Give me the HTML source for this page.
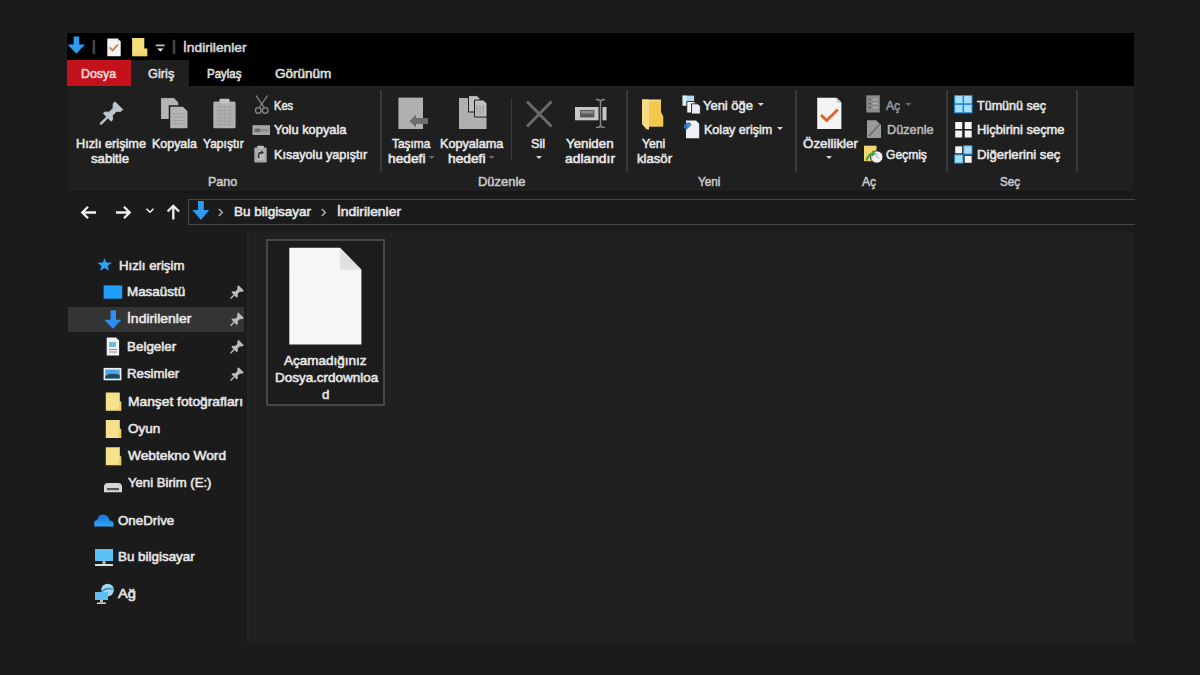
<!DOCTYPE html>
<html><head><meta charset="utf-8"><style>
html,body{margin:0;padding:0;}
body{width:1200px;height:675px;background:#1b1b1b;position:relative;overflow:hidden;font-family:"Liberation Sans", sans-serif;}
.a{position:absolute;}
.t{position:absolute;white-space:nowrap;line-height:1;transform-origin:0 0;}
svg{position:absolute;overflow:visible;}
</style></head><body>
<!-- title bar & tabs -->
<div class="a" style="left:67px;top:33px;width:1067px;height:53px;background:#000"></div>
<div class="a" style="left:67px;top:59.5px;width:64px;height:26.5px;background:#c4121c"></div>
<div class="a" style="left:131px;top:59.5px;width:58px;height:26.5px;background:#1f1f1f"></div>
<!-- ribbon -->
<div class="a" style="left:67px;top:86px;width:1067px;height:106.5px;background:#1f1f1f"></div>
<div class="a" style="left:67px;top:190.5px;width:1067px;height:2px;background:#181818"></div>
<div class="a" style="left:380px;top:90px;width:1.5px;height:82px;background:#3a3a3a"></div>
<div class="a" style="left:626px;top:90px;width:1.5px;height:82px;background:#3a3a3a"></div>
<div class="a" style="left:795px;top:90px;width:1.5px;height:82px;background:#3a3a3a"></div>
<div class="a" style="left:946px;top:90px;width:1.5px;height:82px;background:#3a3a3a"></div>
<div class="a" style="left:1076px;top:90px;width:1.5px;height:82px;background:#3a3a3a"></div>
<div class="a" style="left:511px;top:98px;width:1px;height:62px;background:#3c3c3c"></div>
<!-- address row -->
<div class="a" style="left:67px;top:192.5px;width:1067px;height:39.5px;background:#1b1b1b"></div>
<div class="a" style="left:188px;top:199px;width:946px;height:23.5px;border:1px solid #474747;border-right:none;background:#1b1b1b"></div>
<!-- nav pane -->
<div class="a" style="left:67px;top:232px;width:180px;height:411px;background:#1b1b1b"></div>
<!-- content -->
<div class="a" style="left:247px;top:232px;width:887px;height:411px;background:#202020"></div>
<div class="a" style="left:68px;top:306.5px;width:176px;height:25px;background:#343434"></div>
<div class="a" style="left:247px;top:232px;width:2px;height:411px;background:#252525"></div>
<div class="a" style="left:265.5px;top:239px;width:115.5px;height:162.5px;border:2px solid #474747;background:#1c1c1c"></div>
<svg width="1200" height="675" style="left:0;top:0" viewBox="0 0 1200 675">
<defs>
 <linearGradient id="od" x1="0" y1="0" x2="0" y2="1"><stop offset="0" stop-color="#1670dc"/><stop offset="1" stop-color="#34aaf8"/></linearGradient>
 <g id="dd"><path d="M-3 0 L3 0 L0 3 Z"/></g>
 <g id="pin"><path d="M-1 0 L1 0 L0.8 -2 Z"/></g>
 <g id="fold"><path d="M0 0 L11.5 0 L15.3 4 L15.3 17.8 L0 17.8 Z"/></g>
</defs>
<!-- ===== title bar ===== -->
<path fill="#2f9bf0" d="M73.6 36.5 H79.2 V44.6 H85 L76.4 53.8 L67.6 44.6 H73.6 Z"/>
<rect x="92.6" y="39.8" width="2.6" height="14.2" fill="#444"/>
<rect x="172.7" y="39.8" width="2.6" height="14.2" fill="#444"/>
<path fill="#f4f4f4" d="M107.3 38.4 H117.5 L120.7 41.6 V56.2 H107.3 Z"/>
<path fill="#d0d0d8" d="M117.5 38.4 V41.6 H120.7 Z"/>
<path fill="none" stroke="#c88048" stroke-width="1.8" d="M109.6 47.3 L112.5 50.4 L118 44.6"/>
<path fill="#f6de7c" d="M132.1 38.1 H144.3 V48.6 H147.3 V56.2 H132.1 Z"/>
<path fill="#ecc95a" d="M132.1 52.5 H147.3 V56.2 H132.1 Z" opacity="0.5"/>
<rect x="155.7" y="44.5" width="9" height="1.8" fill="#bdbdbd"/>
<path fill="#f4f4f4" d="M157.3 48.6 H163.5 L160.4 51.6 Z"/>
<!-- ===== ribbon: Pano ===== -->
<g transform="translate(108.3 116.3) rotate(45)" fill="#bcc6cc" stroke="#bcc6cc" stroke-width="0.8" stroke-linejoin="round">
  <path d="M-5.5 1.5 H5.5 V-0.5 L2.3 -3.5 V-9 L5.5 -12.5 V-15 H-5.5 V-12.5 L-2.3 -9 V-3.5 L-5.5 -0.5 Z"/>
  <rect x="-0.9" y="1.5" width="1.8" height="9.5"/>
</g>
<path fill="#b4b4b4" stroke="#1f1f1f" stroke-width="1" d="M160.6 97.6 H174 L178.8 102.4 V119.5 H160.6 Z"/>
<path fill="#b4b4b4" stroke="#1f1f1f" stroke-width="1.5" d="M169.5 106 H183.2 L188.2 111 V129 H169.5 Z"/>
<path fill="none" stroke="#9a9a9a" stroke-width="0.8" d="M173 113.5 H185 M173 117 H185 M173 120.5 H185 M173 124 H185"/>
<rect x="213.3" y="101.5" width="22.3" height="26.8" rx="1.5" fill="#b0b0b0"/>
<rect x="219.5" y="98.8" width="10" height="4.5" rx="1" fill="#c4c4c4"/>
<path fill="none" stroke="#9c9c9c" stroke-width="0.7" d="M216 107 H233 M216 110.5 H233 M216 114 H233 M216 117.5 H233 M216 121 H233 M216 124.5 H233 M219.5 105 V126 M224.5 105 V126 M229.5 105 V126"/>
<!-- scissors -->
<g fill="none" stroke="#8a8a8a" stroke-width="1.3">
  <path d="M256 95.5 L264.5 108 M267.5 95.5 L259 108"/>
  <circle cx="258.3" cy="110.5" r="2.8"/>
  <circle cx="265.2" cy="110.5" r="2.8"/>
</g>
<rect x="252.5" y="125.2" width="17.5" height="9.8" fill="#a6a6a6"/>
<rect x="254.5" y="128.5" width="6" height="3.5" fill="#6a6a6a"/>
<rect x="261.5" y="129" width="7" height="2.5" fill="#8a8a8a"/>
<rect x="254.3" y="147.5" width="12.4" height="15" rx="1" fill="#a8a8a8"/>
<rect x="257.2" y="145.8" width="6.6" height="3" rx="0.8" fill="#c0c0c0"/>
<rect x="256.8" y="150.5" width="7.6" height="9.5" fill="#bdbdbd"/>
<path fill="none" stroke="#3a3a3a" stroke-width="1.6" d="M258.6 158.2 V154.8 Q258.6 152.6 261 152.6 H262.8 M261.2 151.2 L262.8 152.6 L261.2 154"/>
<!-- ===== Düzenle ===== -->
<path fill="#b0b0b0" d="M398.4 97.6 H423 V129 H398.4 Z"/>
<path fill="#6e6e6e" d="M409.5 121 L416 114.5 V118 H428 V124 H416 V127.5 Z"/>
<path fill="#b0b0b0" d="M459 98 H479 L486.5 105.5 V129 H459 Z"/>
<path fill="#c0c0c0" stroke="#1f1f1f" stroke-width="1" d="M468.5 95.6 H477 L480 98.6 V112 H468.5 Z"/>
<path fill="#c0c0c0" stroke="#1f1f1f" stroke-width="1" d="M474.5 100 H483.5 L487 103.5 V117 H474.5 Z"/>
<path stroke="#8a8a8a" stroke-width="0.8" d="M477 105 V115 M480 105 V115 M483 105 V115"/>
<path fill="none" stroke="#6a6a6a" stroke-width="3" d="M527 101.5 L551.5 126.5 M551.5 101.5 L527 126.5"/>
<rect x="575" y="107" width="31.5" height="13.3" fill="#c6c6c6"/>
<rect x="580" y="110" width="14.5" height="7.5" fill="#5a5a5a"/>
<rect x="581" y="111" width="12.5" height="2.5" fill="#8c8c8c"/>
<rect x="598.5" y="106" width="4" height="15.5" fill="#1f1f1f"/>
<path fill="none" stroke="#8a8a8a" stroke-width="1.4" d="M600.5 100.5 V126.5 M596 99.5 Q600.5 99.5 600.5 102 Q600.5 99.5 605 99.5 M596 127.5 Q600.5 127.5 600.5 125 Q600.5 127.5 605 127.5"/>
<!-- ===== Yeni ===== -->
<path fill="#f7da85" d="M642 99.6 H661 V126.3 H649 L647 130 L642 124 Z"/>
<path fill="#f0c64e" d="M649 102 H661 V126.3 H663 V116 L661 112 V126.3 H649 Z"/>
<path fill="#f2c84c" d="M649 101.5 H661 V113 L663.3 117 V126.5 H649 Z"/>
<path fill="#f7da85" d="M642 99.6 H649 V130 L642 124 Z"/>
<rect x="682.6" y="95.6" width="11.5" height="10" fill="#b0dcf0"/>
<rect x="682.6" y="95.6" width="4" height="10" fill="#d6eef8"/>
<path fill="#f4f0f0" stroke="#1f1f1f" stroke-width="0.9" d="M686.8 101.5 H694 L696.5 104 V113 H686.8 Z"/>
<path fill="#ece8f4" stroke="#1f1f1f" stroke-width="0.9" d="M691.5 103.8 H698 L700.4 106.2 V114 H691.5 Z"/>
<path fill="#f2f2f4" d="M686 120.5 H696 L699.2 123.7 V138.2 H686 Z"/>
<path fill="#2a6fb8" d="M683.5 127.5 Q684 122 689.5 122.5 L691.5 124.5 L686.5 129.5 Z"/>
<path fill="#4a9ae0" d="M686.5 123.5 H690 L691.5 125 L687.5 129 Z" opacity="0.8"/>
<!-- ===== Aç ===== -->
<path fill="#f4f4f4" d="M817.2 97.7 H836.5 L841.4 102.6 V129.1 H817.2 Z"/>
<path fill="#c8c8d0" d="M836.5 97.7 V102.6 H841.4 Z"/>
<path fill="none" stroke="#e0622a" stroke-width="2.8" d="M821 115 L826.6 120.6 L837.8 109.4"/>
<rect x="866.3" y="95.3" width="13.5" height="17.2" fill="#8c8c8c"/>
<path stroke="#5c5c5c" stroke-width="1.5" d="M868.5 99.5 H871 M868.5 103.5 H871 M868.5 107.5 H871"/>
<path stroke="#b0b0b0" stroke-width="1.5" d="M872.5 99.5 H878 M872.5 103.5 H878 M872.5 107.5 H878"/>
<path fill="#9a9a9a" d="M867 120.2 H876 L881 125 V138 H867 Z"/>
<path fill="none" stroke="#6a6a6a" stroke-width="1.5" d="M869 136 L880 124"/>
<rect x="864" y="145.7" width="12.5" height="15.5" fill="#f4d770"/>
<circle cx="876.8" cy="157" r="6.2" fill="#f0f0f0" stroke="#1f1f1f" stroke-width="1"/>
<path fill="none" stroke="#9aa0a8" stroke-width="0.9" d="M876.8 153.5 V157 L879 158.5"/>
<path fill="none" stroke="#3aa83a" stroke-width="2.2" d="M866.5 160.5 Q869 153 874 153.5"/>
<path fill="#3aa83a" d="M872 150.5 L876 153.5 L872 156.8 Z"/>
<!-- ===== Seç ===== -->
<g fill="#a6e0fa" stroke="#2b8fd8" stroke-width="1">
 <rect x="954.7" y="95.5" width="8.3" height="8.3"/>
 <rect x="963.7" y="95.5" width="8.3" height="8.3"/>
 <rect x="954.7" y="104.5" width="8.3" height="8.3"/>
 <rect x="963.7" y="104.5" width="8.3" height="8.3"/>
</g>
<g fill="#f4f4f4">
 <rect x="955.2" y="122" width="7" height="7"/>
 <rect x="964.7" y="122" width="7" height="7"/>
 <rect x="955.2" y="130.5" width="7" height="7"/>
 <rect x="964.7" y="130.5" width="7" height="7"/>
</g>
<rect x="955.2" y="146.3" width="7" height="7" fill="#f4f4f4"/>
<rect x="963.7" y="145.8" width="8.3" height="8.3" fill="#a6e0fa" stroke="#2b8fd8" stroke-width="1"/>
<rect x="954.7" y="154.8" width="8.3" height="8.3" fill="#a6e0fa" stroke="#2b8fd8" stroke-width="1"/>
<rect x="964.7" y="155.8" width="7" height="7" fill="#f4f4f4"/>
<!-- dropdown arrows -->
<g fill="#d8d8d8">
 <use href="#dd" x="539" y="156"/>
 <use href="#dd" x="829" y="156"/>
 <use href="#dd" x="760.8" y="103"/>
 <use href="#dd" x="780" y="127"/>
</g>
<g fill="#6a6a6a"><use href="#dd" x="908.3" y="103"/><use href="#dd" x="431.7" y="156"/><use href="#dd" x="491.7" y="156"/></g>
<!-- ===== nav buttons ===== -->
<g fill="none" stroke="#f0f0f0" stroke-width="2.3">
 <path d="M82.3 212.5 H96 M88 206.8 L82.3 212.5 L88 218.2"/>
 <path d="M116 212.5 H129.7 M124 206.8 L129.7 212.5 L124 218.2"/>
 <path d="M173.3 219.5 V205.8 M167.6 211.5 L173.3 205.8 L179 211.5"/>
 <path stroke-width="1.5" d="M146.5 208.8 L150 212.3 L153.5 208.8"/>
</g>
<path fill="#2f9bf0" d="M198 201 H203.8 V210 H209.2 L200.9 220 L192.5 210 H198 Z"/>
<g fill="none" stroke="#a8a8a8" stroke-width="1.6">
 <path d="M218.8 209 L222.3 212.5 L218.8 216"/>
 <path d="M321.8 209 L325.3 212.5 L321.8 216"/>
</g>
<!-- ===== nav pane ===== -->
<path fill="#2fa3f5" d="M104.6 258.3 L106.3 262.4 L111.8 262.7 L107.6 265.9 L109.1 270.8 L104.6 268 L100.1 270.8 L101.6 265.9 L97.4 262.7 L102.9 262.4 Z"/>
<rect x="103.6" y="285.4" width="18.6" height="13.3" fill="#1fa0f8"/>
<path fill="#2b8ef0" d="M110.5 310.3 H116 V319.7 H121.4 L112.9 328.8 L104.3 319.7 H110.5 Z"/>
<path fill="#f2f2f2" d="M106.7 337.5 H116 L119.1 340.6 V355.4 H106.7 Z"/>
<path fill="#5aa8d8" d="M109 342 H116 V347 H109 Z" opacity="0.8"/>
<path stroke="#7a8a9a" stroke-width="1" d="M109 349.5 H117 M109 352 H117"/>
<rect x="103.6" y="367.9" width="17.8" height="12.4" fill="#f0f0f0"/>
<rect x="105.3" y="369.6" width="14.4" height="9" fill="#4aa8e8"/>
<path fill="#1e4a5a" d="M105.3 376 Q110 372 119.7 375 V378.6 H105.3 Z"/>
<g fill="#f6e28a">
 <path d="M105.8 392.6 H119.8 V400.9 L121.2 402.1 V410.7 H105.8 Z"/>
 <path d="M105.8 419.9 H119.8 V428.2 L121.2 429.4 V438.0 H105.8 Z"/>
 <path d="M105.8 447.2 H119.8 V455.5 L121.2 456.7 V465.3 H105.8 Z"/>
 <path fill="#e9c850" opacity="0.7" d="M119.8 400.9 L121.2 402.1 V410.7 H118 Z M119.8 428.2 L121.2 429.4 V438 H118 Z M119.8 455.5 L121.2 456.7 V465.3 H118 Z"/>
</g>
<path fill="#d6d6d6" d="M104 492.3 V487 Q104 483 108 483 H118 Q122 483 122 487 V492.3 Z"/>
<rect x="107" y="488" width="12" height="2.2" fill="#555"/>
<path fill="url(#od)" d="M95.3 526.5 H112 Q114 527.3 113.5 523.5 Q113 520.5 109.5 520.5 Q108 514 102.5 514.5 Q98 515 97.5 519.5 Q94 520 94.2 524 Q94.5 527.3 96 527.3 Z"/>
<rect x="95" y="549" width="18" height="12" fill="#5cc0f5"/>
<rect x="102.5" y="561" width="3" height="3" fill="#b8b8b8"/>
<rect x="95" y="564" width="18" height="2" fill="#e0e0e0"/>
<circle cx="107.6" cy="590" r="6.3" fill="#a4d8f2"/>
<path fill="#2f86d0" d="M101.5 590.5 Q106 585.5 113.6 588.5 V590.2 Q107 588 101.8 592.5 Z" opacity="0.8"/>
<rect x="95" y="592" width="13" height="8" fill="#5cc0f5"/>
<rect x="100" y="600" width="3" height="2.5" fill="#b8b8b8"/>
<rect x="97" y="602.5" width="9" height="1.5" fill="#d8d8d8"/>
<g fill="#bcbcbc">
 <g transform="translate(234.8 294.3) rotate(45)"><path d="M-3.8 1 H3.8 V-0.5 L1.7 -2.3 V-5.2 L3.8 -7.5 V-9 H-3.8 V-7.5 L-1.7 -5.2 V-2.3 L-3.8 -0.5 Z"/><rect x="-0.7" y="1" width="1.4" height="5"/></g>
 <g transform="translate(234.8 321.6) rotate(45)"><path d="M-3.8 1 H3.8 V-0.5 L1.7 -2.3 V-5.2 L3.8 -7.5 V-9 H-3.8 V-7.5 L-1.7 -5.2 V-2.3 L-3.8 -0.5 Z"/><rect x="-0.7" y="1" width="1.4" height="5"/></g>
 <g transform="translate(234.8 348.9) rotate(45)"><path d="M-3.8 1 H3.8 V-0.5 L1.7 -2.3 V-5.2 L3.8 -7.5 V-9 H-3.8 V-7.5 L-1.7 -5.2 V-2.3 L-3.8 -0.5 Z"/><rect x="-0.7" y="1" width="1.4" height="5"/></g>
 <g transform="translate(234.8 376.2) rotate(45)"><path d="M-3.8 1 H3.8 V-0.5 L1.7 -2.3 V-5.2 L3.8 -7.5 V-9 H-3.8 V-7.5 L-1.7 -5.2 V-2.3 L-3.8 -0.5 Z"/><rect x="-0.7" y="1" width="1.4" height="5"/></g>
</g>
<!-- ===== file ===== -->
<path fill="#f6f6f6" d="M289.3 247.8 H340 L361.4 269.7 V344.6 H289.3 Z"/>
<path fill="#e0e0e0" d="M340 247.8 V269.7 H361.4 Z"/>
</svg>

<div class="t" style="left:183.0px;top:40.5px;font-size:13.2px;color:#d6d6d6;transform:scaleX(1.044);-webkit-text-stroke:0.55px #d6d6d6;">İndirilenler</div><div class="t" style="left:81.3px;top:67.0px;font-size:13px;color:#f4dada;transform:scaleX(0.950);-webkit-text-stroke:0.55px #f4dada;">Dosya</div><div class="t" style="left:147.5px;top:67.0px;font-size:13px;color:#e0e0e0;transform:scaleX(0.984);-webkit-text-stroke:0.55px #e0e0e0;">Giriş</div><div class="t" style="left:207.0px;top:67.0px;font-size:13px;color:#e0e0e0;transform:scaleX(0.884);-webkit-text-stroke:0.55px #e0e0e0;">Paylaş</div><div class="t" style="left:275.0px;top:67.0px;font-size:13px;color:#e0e0e0;transform:scaleX(1.039);-webkit-text-stroke:0.55px #e0e0e0;">Görünüm</div><div class="t" style="left:76.3px;top:136.8px;font-size:13.2px;color:#e8e8e8;transform:scaleX(0.965);-webkit-text-stroke:0.55px #e8e8e8;">Hızlı erişime</div><div class="t" style="left:91.3px;top:151.8px;font-size:13.2px;color:#e8e8e8;transform:scaleX(0.997);-webkit-text-stroke:0.55px #e8e8e8;">sabitle</div><div class="t" style="left:151.7px;top:136.8px;font-size:13.2px;color:#e8e8e8;transform:scaleX(0.944);-webkit-text-stroke:0.55px #e8e8e8;">Kopyala</div><div class="t" style="left:203.3px;top:136.8px;font-size:13.2px;color:#e8e8e8;transform:scaleX(0.915);-webkit-text-stroke:0.55px #e8e8e8;">Yapıştır</div><div class="t" style="left:274.2px;top:98.8px;font-size:13.2px;color:#e8e8e8;transform:scaleX(0.840);-webkit-text-stroke:0.55px #e8e8e8;">Kes</div><div class="t" style="left:274.2px;top:122.8px;font-size:13.2px;color:#e8e8e8;transform:scaleX(0.976);-webkit-text-stroke:0.55px #e8e8e8;">Yolu kopyala</div><div class="t" style="left:274.2px;top:147.8px;font-size:13.2px;color:#e8e8e8;transform:scaleX(0.957);-webkit-text-stroke:0.55px #e8e8e8;">Kısayolu yapıştır</div><div class="t" style="left:208.3px;top:174.8px;font-size:13.2px;color:#c8c8c8;transform:scaleX(0.948);-webkit-text-stroke:0.55px #c8c8c8;">Pano</div><div class="t" style="left:391.7px;top:136.8px;font-size:13.2px;color:#e8e8e8;transform:scaleX(0.901);-webkit-text-stroke:0.55px #e8e8e8;">Taşıma</div><div class="t" style="left:387.5px;top:151.8px;font-size:13.2px;color:#e8e8e8;transform:scaleX(1.043);-webkit-text-stroke:0.55px #e8e8e8;">hedefi</div><div class="t" style="left:440.0px;top:136.8px;font-size:13.2px;color:#e8e8e8;transform:scaleX(0.959);-webkit-text-stroke:0.55px #e8e8e8;">Kopyalama</div><div class="t" style="left:447.5px;top:151.8px;font-size:13.2px;color:#e8e8e8;transform:scaleX(1.043);-webkit-text-stroke:0.55px #e8e8e8;">hedefi</div><div class="t" style="left:530.8px;top:136.8px;font-size:13.2px;color:#e8e8e8;transform:scaleX(0.969);-webkit-text-stroke:0.55px #e8e8e8;">Sil</div><div class="t" style="left:565.8px;top:136.8px;font-size:13.2px;color:#e8e8e8;transform:scaleX(1.007);-webkit-text-stroke:0.55px #e8e8e8;">Yeniden</div><div class="t" style="left:565.0px;top:151.8px;font-size:13.2px;color:#e8e8e8;transform:scaleX(1.049);-webkit-text-stroke:0.55px #e8e8e8;">adlandır</div><div class="t" style="left:478.3px;top:174.8px;font-size:13.2px;color:#c8c8c8;transform:scaleX(0.982);-webkit-text-stroke:0.55px #c8c8c8;">Düzenle</div><div class="t" style="left:641.7px;top:136.8px;font-size:13.2px;color:#e8e8e8;transform:scaleX(0.925);-webkit-text-stroke:0.55px #e8e8e8;">Yeni</div><div class="t" style="left:636.7px;top:151.8px;font-size:13.2px;color:#e8e8e8;transform:scaleX(0.995);-webkit-text-stroke:0.55px #e8e8e8;">klasör</div><div class="t" style="left:703.3px;top:98.8px;font-size:13.2px;color:#e8e8e8;transform:scaleX(0.983);-webkit-text-stroke:0.55px #e8e8e8;">Yeni öğe</div><div class="t" style="left:704.2px;top:122.8px;font-size:13.2px;color:#e8e8e8;transform:scaleX(0.951);-webkit-text-stroke:0.55px #e8e8e8;">Kolay erişim</div><div class="t" style="left:697.5px;top:174.8px;font-size:13.2px;color:#c8c8c8;transform:scaleX(0.893);-webkit-text-stroke:0.55px #c8c8c8;">Yeni</div><div class="t" style="left:802.5px;top:136.8px;font-size:13.2px;color:#e8e8e8;transform:scaleX(1.014);-webkit-text-stroke:0.55px #e8e8e8;">Özellikler</div><div class="t" style="left:885.8px;top:98.8px;font-size:13.2px;color:#9a9a9a;transform:scaleX(0.923);-webkit-text-stroke:0.55px #9a9a9a;">Aç</div><div class="t" style="left:886.7px;top:122.8px;font-size:13.2px;color:#b8b8b8;transform:scaleX(0.963);-webkit-text-stroke:0.55px #b8b8b8;">Düzenle</div><div class="t" style="left:885.8px;top:147.8px;font-size:13.2px;color:#e8e8e8;transform:scaleX(0.915);-webkit-text-stroke:0.55px #e8e8e8;">Geçmiş</div><div class="t" style="left:861.7px;top:174.8px;font-size:13.2px;color:#c8c8c8;transform:scaleX(0.916);-webkit-text-stroke:0.55px #c8c8c8;">Aç</div><div class="t" style="left:976.7px;top:98.8px;font-size:13.2px;color:#e8e8e8;transform:scaleX(0.952);-webkit-text-stroke:0.55px #e8e8e8;">Tümünü seç</div><div class="t" style="left:976.7px;top:122.8px;font-size:13.2px;color:#e8e8e8;transform:scaleX(0.979);-webkit-text-stroke:0.55px #e8e8e8;">Hiçbirini seçme</div><div class="t" style="left:976.7px;top:147.8px;font-size:13.2px;color:#e8e8e8;transform:scaleX(0.997);-webkit-text-stroke:0.55px #e8e8e8;">Diğerlerini seç</div><div class="t" style="left:1000.0px;top:174.8px;font-size:13.2px;color:#c8c8c8;transform:scaleX(0.880);-webkit-text-stroke:0.55px #c8c8c8;">Seç</div><div class="t" style="left:234.0px;top:204.8px;font-size:13.2px;color:#e8e8e8;transform:scaleX(1.020);-webkit-text-stroke:0.55px #e8e8e8;">Bu bilgisayar</div><div class="t" style="left:337.0px;top:204.8px;font-size:13.2px;color:#e8e8e8;transform:scaleX(1.052);-webkit-text-stroke:0.55px #e8e8e8;">İndirilenler</div><div class="t" style="left:119.1px;top:258.5px;font-size:13.2px;color:#e8e8e8;transform:scaleX(1.003);-webkit-text-stroke:0.55px #e8e8e8;">Hızlı erişim</div><div class="t" style="left:127.4px;top:285.1px;font-size:13.2px;color:#e8e8e8;transform:scaleX(1.016);-webkit-text-stroke:0.55px #e8e8e8;">Masaüstü</div><div class="t" style="left:127.4px;top:312.4px;font-size:13.2px;color:#e8e8e8;transform:scaleX(1.057);-webkit-text-stroke:0.55px #e8e8e8;">İndirilenler</div><div class="t" style="left:127.4px;top:339.8px;font-size:13.2px;color:#e8e8e8;transform:scaleX(1.017);-webkit-text-stroke:0.55px #e8e8e8;">Belgeler</div><div class="t" style="left:127.4px;top:367.1px;font-size:13.2px;color:#e8e8e8;transform:scaleX(1.005);-webkit-text-stroke:0.55px #e8e8e8;">Resimler</div><div class="t" style="left:127.7px;top:394.6px;font-size:13.2px;color:#e8e8e8;transform:scaleX(1.046);-webkit-text-stroke:0.55px #e8e8e8;">Manşet fotoğrafları</div><div class="t" style="left:127.7px;top:421.8px;font-size:13.2px;color:#e8e8e8;transform:scaleX(1.024);-webkit-text-stroke:0.55px #e8e8e8;">Oyun</div><div class="t" style="left:127.7px;top:449.1px;font-size:13.2px;color:#e8e8e8;transform:scaleX(1.042);-webkit-text-stroke:0.55px #e8e8e8;">Webtekno Word</div><div class="t" style="left:127.7px;top:476.4px;font-size:13.2px;color:#e8e8e8;transform:scaleX(0.996);-webkit-text-stroke:0.55px #e8e8e8;">Yeni Birim (E:)</div><div class="t" style="left:118.3px;top:514.4px;font-size:13.2px;color:#e8e8e8;transform:scaleX(1.009);-webkit-text-stroke:0.55px #e8e8e8;">OneDrive</div><div class="t" style="left:118.3px;top:550.1px;font-size:13.2px;color:#e8e8e8;transform:scaleX(1.016);-webkit-text-stroke:0.55px #e8e8e8;">Bu bilgisayar</div><div class="t" style="left:118.3px;top:586.8px;font-size:13.2px;color:#e8e8e8;transform:scaleX(1.109);-webkit-text-stroke:0.55px #e8e8e8;">Ağ</div><div class="t" style="left:284.4px;top:353.8px;font-size:13.2px;color:#e8e8e8;transform:scaleX(1.024);-webkit-text-stroke:0.55px #e8e8e8;">Açamadığınız</div><div class="t" style="left:274.5px;top:371.1px;font-size:13.2px;color:#e8e8e8;transform:scaleX(1.020);-webkit-text-stroke:0.55px #e8e8e8;">Dosya.crdownloa</div><div class="t" style="left:322.3px;top:388.4px;font-size:13.2px;color:#e8e8e8;transform:scaleX(1.008);-webkit-text-stroke:0.55px #e8e8e8;">d</div>
</body></html>
